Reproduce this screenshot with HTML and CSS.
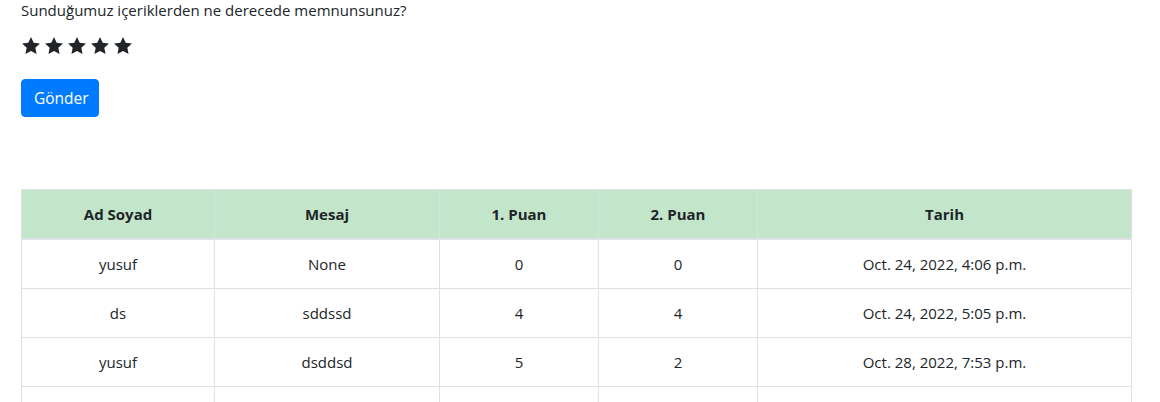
FILE: index.html
```html
<!DOCTYPE html>
<html lang="tr">
<head>
<meta charset="utf-8">
<title>Değerlendirme</title>
<link rel="stylesheet" href="styles.css">
</head>
<body>
<div class="container">
  <form class="rating-form">
    <p class="question">Sunduğumuz içeriklerden ne derecede memnunsunuz?</p>
    <div class="stars">
      <svg class="star" viewBox="1.7 1.6 20.6 19.6"><path d="M12 1.6l3.1 6.6 7.2.9-5.3 5 1.4 7.1L12 17.7l-6.4 3.5 1.4-7.1-5.3-5 7.2-.9z"/></svg>
      <svg class="star" viewBox="1.7 1.6 20.6 19.6"><path d="M12 1.6l3.1 6.6 7.2.9-5.3 5 1.4 7.1L12 17.7l-6.4 3.5 1.4-7.1-5.3-5 7.2-.9z"/></svg>
      <svg class="star" viewBox="1.7 1.6 20.6 19.6"><path d="M12 1.6l3.1 6.6 7.2.9-5.3 5 1.4 7.1L12 17.7l-6.4 3.5 1.4-7.1-5.3-5 7.2-.9z"/></svg>
      <svg class="star" viewBox="1.7 1.6 20.6 19.6"><path d="M12 1.6l3.1 6.6 7.2.9-5.3 5 1.4 7.1L12 17.7l-6.4 3.5 1.4-7.1-5.3-5 7.2-.9z"/></svg>
      <svg class="star" viewBox="1.7 1.6 20.6 19.6"><path d="M12 1.6l3.1 6.6 7.2.9-5.3 5 1.4 7.1L12 17.7l-6.4 3.5 1.4-7.1-5.3-5 7.2-.9z"/></svg>
    </div>
    <button type="button" class="btn">Gönder</button>
  </form>

  <table class="results">
    <thead>
      <tr>
        <th class="c-name">Ad Soyad</th>
        <th class="c-msg">Mesaj</th>
        <th class="c-p1">1. Puan</th>
        <th class="c-p2">2. Puan</th>
        <th class="c-date">Tarih</th>
      </tr>
    </thead>
    <tbody>
      <tr><td>yusuf</td><td>None</td><td>0</td><td>0</td><td>Oct. 24, 2022, 4:06 p.m.</td></tr>
      <tr><td>ds</td><td>sddssd</td><td>4</td><td>4</td><td>Oct. 24, 2022, 5:05 p.m.</td></tr>
      <tr><td>yusuf</td><td>dsddsd</td><td>5</td><td>2</td><td>Oct. 28, 2022, 7:53 p.m.</td></tr>
      <tr><td>&nbsp;</td><td>&nbsp;</td><td>&nbsp;</td><td>&nbsp;</td><td>&nbsp;</td></tr>
    </tbody>
  </table>
</div>
</body>
</html>
```
FILE: styles.css
```css
html, body {
  margin: 0;
  padding: 0;
  background: #fff;
}
body {
  font-family: "Open Sans", "Noto Sans", sans-serif;
  font-size: 15px;
  line-height: 24px;
  color: #212529;
}
.container {
  width: 1110px;
  padding: 0 21px;
}
.rating-form {
  margin: 0;
}
.question {
  margin: -2px 0 0 0;
}
.stars {
  display: flex;
  gap: 5px;
  margin-top: 15px;
  padding-left: 1px;
  height: 17px;
}
.star {
  width: 18px;
  height: 17px;
  fill: #212529;
}
.btn {
  display: block;
  margin-top: 25px;
  width: 78px;
  height: 38px;
  padding: 6px 12px;
  font-family: inherit;
  font-size: 15.5px;
  line-height: 24px;
  color: #fff;
  background: #007bff;
  border: 1px solid #007bff;
  border-radius: 4px;
}
.results {
  margin-top: 72px;
  width: 1110px;
  border-collapse: collapse;
  table-layout: fixed;
}
.results th, .results td {
  box-sizing: border-box;
  border: 1px solid #dee2e6;
  padding: 12px;
  text-align: center;
  vertical-align: middle;
  line-height: 24px;
}
.results th {
  font-weight: 700;
  background: #c3e6cb;
  border-bottom-width: 2px;
  border-color: #dee2e6;
}
.c-name { width: 193px; }
.c-msg { width: 225px; }
.c-p1 { width: 159px; }
.c-p2 { width: 159px; }
.c-date { width: 374px; }
```
